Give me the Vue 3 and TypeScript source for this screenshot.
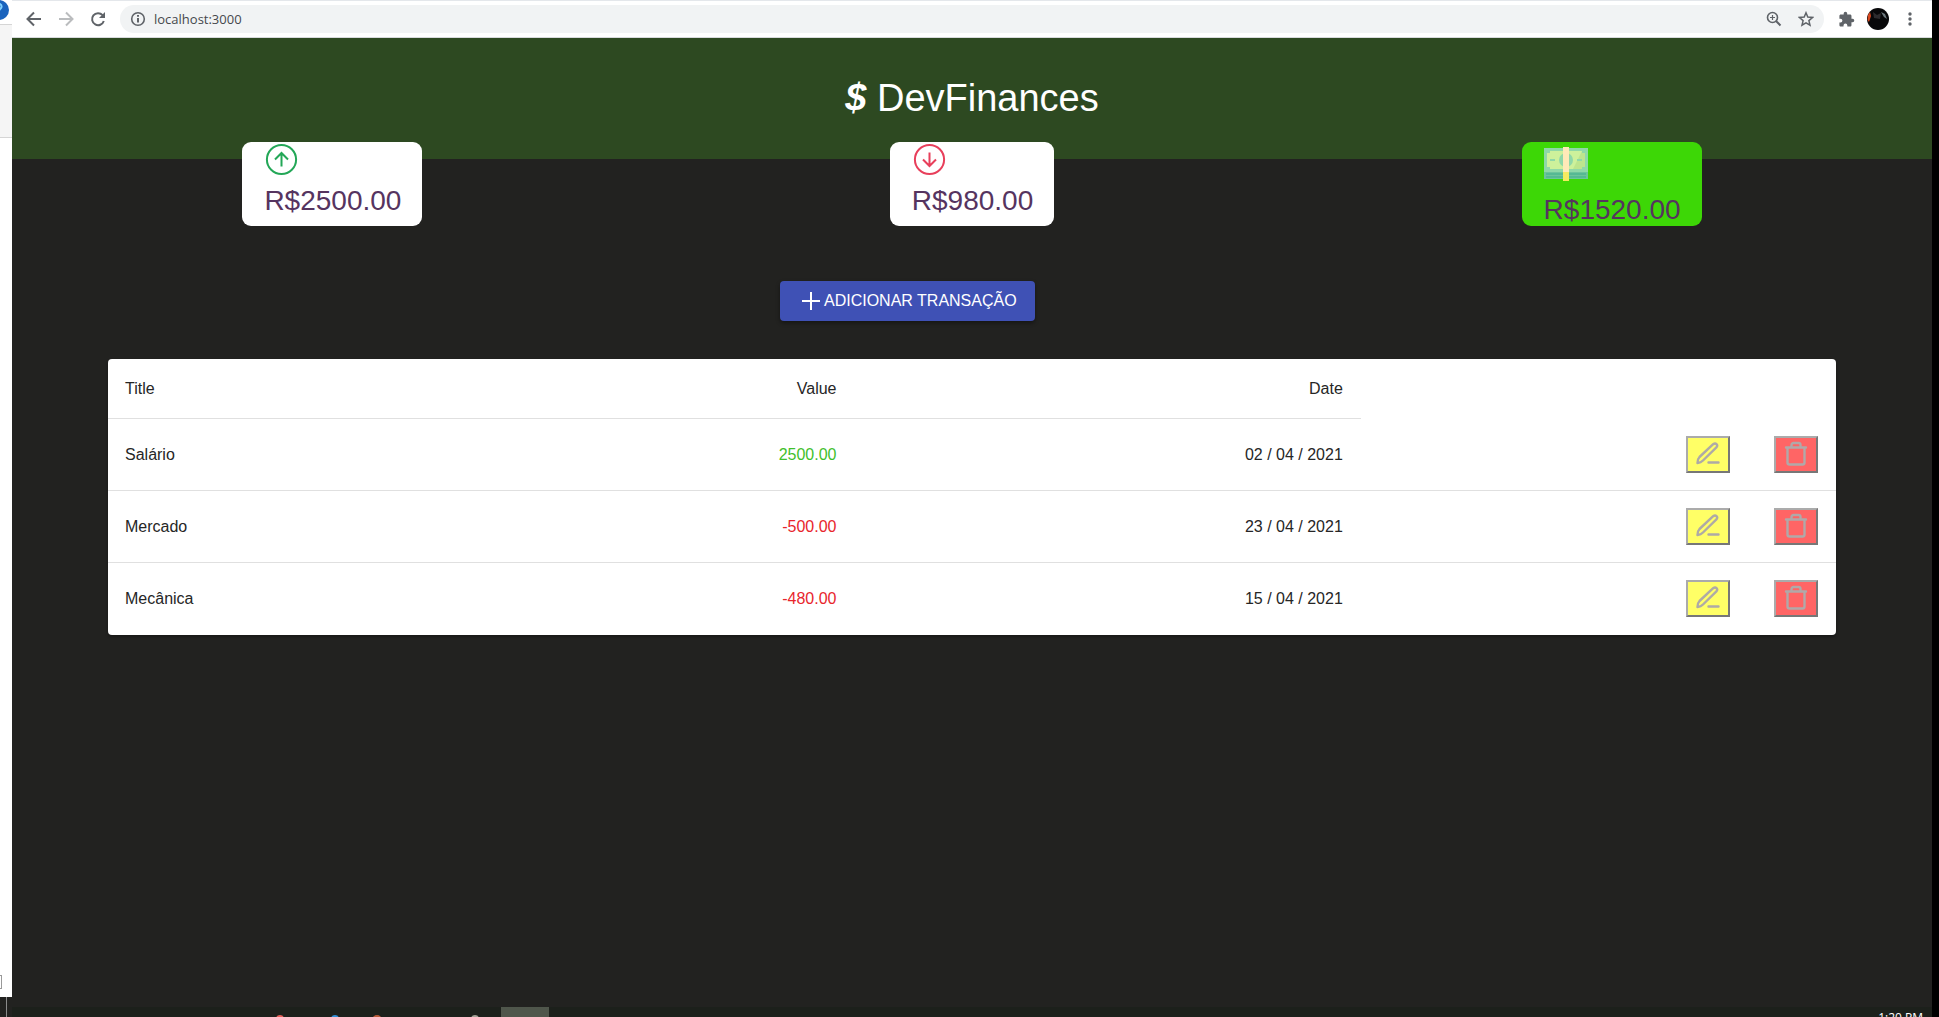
<script setup lang="ts">
import { ref } from 'vue'

interface Transaction {
  id: number
  title: string
  value: number
  date: string
}

const address = ref('localhost:3000')

const transactions = ref<Transaction[]>([
  { id: 1, title: 'Salário', value: 2500, date: '02 / 04 / 2021' },
  { id: 2, title: 'Mercado', value: -500, date: '23 / 04 / 2021' },
  { id: 3, title: 'Mecânica', value: -480, date: '15 / 04 / 2021' },
])
</script>

<template>
  <div class="desktop">
    <div class="behind" aria-hidden="true">
      <div class="behind-top">
        <svg width="12" height="24" viewBox="0 0 12 24">
          <circle cx="-1" cy="10" r="10" fill="#1a63bd" />
          <path d="M-3 5c2-2 5-1 4.500 2-.3 2-2.500 2-2.500 4" fill="none" stroke="#7fd0ff" stroke-width="2" />
        </svg>
      </div>
      <div class="behind-panel"></div>
      <div class="behind-body"><span class="behind-box"></span></div>
      <div class="behind-foot"></div>
    </div>

    <div class="window">
      <nav class="toolbar">
        <button class="tool" type="button" aria-label="Back">
          <svg width="16" height="16" viewBox="0 0 16 16" fill="none" stroke="#5f6368" stroke-width="2"><path d="M15 8H2M8 1.500 1.500 8 8 14.500" /></svg>
        </button>
        <button class="tool" type="button" aria-label="Forward">
          <svg width="16" height="16" viewBox="0 0 16 16" fill="none" stroke="#babcbe" stroke-width="2"><path d="M1 8h13M8 1.500 14.500 8 8 14.500" /></svg>
        </button>
        <button class="tool" type="button" aria-label="Reload">
          <svg width="16" height="16" viewBox="0 0 16 16"><path d="M12.600 4.200A6 6 0 1 0 13.800 10" fill="none" stroke="#5f6368" stroke-width="2" /><path d="M15 1v6H9z" fill="#5f6368" /></svg>
        </button>
        <div class="omnibox">
          <svg width="16" height="16" viewBox="0 0 16 16" fill="none" stroke="#5f6368" stroke-width="1.600"><circle cx="8" cy="8" r="6.300" /><path d="M8 7v4.500M8 4v1.800" stroke-width="2" /></svg>
          <input v-model="address" class="address" type="text" aria-label="Address" />
          <button class="tool" type="button" aria-label="Zoom">
            <svg width="16" height="16" viewBox="0 0 16 16" fill="none" stroke="#5f6368" stroke-width="1.600"><circle cx="6.500" cy="6.500" r="5" /><path d="m10 10 4.500 4.500" stroke-width="2" /><path d="M6.500 4v5M4 6.500h5" stroke-width="1.200" /></svg>
          </button>
          <button class="tool" type="button" aria-label="Bookmark">
            <svg width="16" height="16" viewBox="0 0 16 16" fill="none" stroke="#5f6368" stroke-width="1.500"><path d="m8 1.800 1.800 4.300 4.700.4-3.600 3.100 1.100 4.600L8 11.800l-4 2.400 1.100-4.600L1.500 6.500l4.700-.4z" /></svg>
          </button>
        </div>
        <button class="tool" type="button" aria-label="Extensions">
          <svg width="17" height="17" viewBox="0 0 24 24" fill="#5f6368"><path d="M20.500 11H19V7c0-1.100-.9-2-2-2h-4V3.500a2.500 2.500 0 0 0-5 0V5H4c-1.100 0-2 .9-2 2v3.800h1.500a2.700 2.700 0 0 1 0 5.400H2V20c0 1.100.9 2 2 2h3.800v-1.500a2.700 2.700 0 0 1 5.400 0V22H17c1.100 0 2-.9 2-2v-4h1.500a2.500 2.500 0 0 0 0-5z" /></svg>
        </button>
        <button class="tool" type="button" aria-label="Profile">
          <svg width="22" height="22" viewBox="0 0 22 22">
            <circle cx="11" cy="11" r="11" fill="#08080a" />
            <path d="M1 7 3 4l1 4-2 6-1.500-2z" fill="#d9481f" />
            <path d="m14 4 4 2 2 5-3-2z" fill="#6f7b80" />
            <path d="m6 4 4 3 4-2-1 6-6-1z" fill="#2d2b2e" />
          </svg>
        </button>
        <button class="tool" type="button" aria-label="Menu">
          <svg width="16" height="16" viewBox="0 0 16 16" fill="#5f6368"><circle cx="8" cy="3" r="1.700" /><circle cx="8" cy="8" r="1.700" /><circle cx="8" cy="13" r="1.700" /></svg>
        </button>
      </nav>

      <main class="page">
        <header class="hero">
          <h1 class="brand"><em class="brand-mark">$</em> DevFinances</h1>
        </header>

        <section class="cards">
          <div class="card">
            <svg width="35" height="35" viewBox="0 0 35 35" fill="none" stroke="#23a757" stroke-width="2"><circle cx="17.500" cy="17.500" r="14.600" /><path d="M17.500 24.500v-13M11 17.500l6.500-6.500 6.500 6.500" /></svg>
            <span class="amount">R$2500.00</span>
          </div>
          <div class="card">
            <svg width="35" height="35" viewBox="0 0 35 35" fill="none" stroke="#e83f5b" stroke-width="2"><circle cx="17.500" cy="17.500" r="14.600" /><path d="M17.500 10.500v13M11 17.500l6.500 6.500 6.500-6.500" /></svg>
            <span class="amount">R$980.00</span>
          </div>
          <div class="card total">
            <svg width="44" height="44" viewBox="0 0 44 44">
              <path d="M0 6h44v24H0z" fill="#8fd8a8" />
              <path d="M0 30h44v7H0z" fill="#6cc49b" />
              <path d="M2 32h40M2 35h40" stroke="#3fae8c" stroke-width="1" />
              <path d="M6 9h32v2h3v14h-3v2H6v-2H3V11h3z" fill="#cdf19b" />
              <path d="M38 9v2h3v14h-3v2h-9z" fill="#bde58d" />
              <circle cx="22" cy="18" r="7" fill="#8fd8a8" />
              <path d="M6 17h5v2H6zM33 17h5v2h-5z" fill="#8fd8a8" />
              <path d="M19 5h6v25h-6z" fill="#ffe9b8" />
              <path d="M19 30h6v9h-6z" fill="#f5ea60" />
            </svg>
            <span class="amount">R$1520.00</span>
          </div>
        </section>

        <button class="add" type="button">
          <svg width="22" height="22" viewBox="0 0 22 22" fill="none" stroke="#fff" stroke-width="2"><path d="M11 2v18M2 11h18" /></svg>
          ADICIONAR TRANSAÇÃO
        </button>

        <table class="sheet">
          <colgroup>
            <col class="col-title" /><col class="col-value" /><col class="col-date" /><col class="col-edit" /><col class="col-delete" />
          </colgroup>
          <thead>
            <tr>
              <th scope="col" class="start">Title</th>
              <th scope="col">Value</th>
              <th scope="col">Date</th>
              <td class="blank" colspan="2"></td>
            </tr>
          </thead>
          <tbody>
            <tr v-for="item in transactions" :key="item.id">
              <td class="start">{{ item.title }}</td>
              <td :class="item.value < 0 ? 'expense' : 'income'">{{ item.value.toFixed(2) }}</td>
              <td>{{ item.date }}</td>
              <td class="action">
                <button class="act edit" type="button" :aria-label="`Edit ${item.title}`">
                  <svg width="26" height="26" viewBox="0 0 26 26" fill="none" stroke="#aeaaa6" stroke-width="2.400" stroke-linecap="round" stroke-linejoin="round"><path d="M2.500 23c0-3 .5-4.500 2-6L18.200 4.200c2.500-2 5.300.8 3.200 3.200L8 20.500c-1.500 1.500-3 2.200-5.500 2.500zM13.500 22.500h10" /></svg>
                </button>
              </td>
              <td class="action">
                <button class="act delete" type="button" :aria-label="`Delete ${item.title}`">
                  <svg width="26" height="26" viewBox="0 0 26 26" fill="none" stroke="#b0a9a9" stroke-width="2.400" stroke-linecap="round" stroke-linejoin="round"><path d="M3 7.500h20M4.500 7.500v15a2 2 0 0 0 2 2h13a2 2 0 0 0 2-2v-15M8.500 7V5a2 2 0 0 1 2-2h5a2 2 0 0 1 2 2v2" /></svg>
                </button>
              </td>
            </tr>
          </tbody>
        </table>
      </main>

      <footer class="taskbar">
        <svg class="apps" width="229" height="10" viewBox="0 0 229 10" aria-hidden="true">
          <circle cx="8" cy="12" r="4" fill="#e8615a" />
          <circle cx="63" cy="12" r="4" fill="#2f8fd8" />
          <circle cx="105" cy="13" r="5" fill="#b85a38" />
          <circle cx="203" cy="12" r="4" fill="#a3a397" />
        </svg>
        <span class="active-app"></span>
        <time class="clock">1:20 PM</time>
      </footer>
    </div>

    <div class="edge"></div>
  </div>
</template>

<style>
body {
  margin: 0;
  background: #000;
}
</style>

<style scoped>
.desktop {
  display: flex;
  min-height: 100vh;
  font-family: "Liberation Sans", Arial, sans-serif;
  font-size: 16px;
  line-height: 24px;
}

.desktop * {
  box-sizing: border-box;
}

.desktop svg {
  display: block;
  flex: none;
}

button {
  font: inherit;
}

/* Sliver of the window that sits behind the browser */
.behind {
  display: flex;
  flex: none;
  flex-direction: column;
  width: 12px;
  background: #fff;
}

.behind-top {
  height: 24px;
}

.behind-panel {
  height: 114px;
  border-top: 1px solid #d5d5d5;
  border-bottom: 1px solid #d5d5d5;
  background: #f5f5f5;
}

.behind-body {
  display: flex;
  flex: 1;
  align-items: flex-end;
  padding-bottom: 8px;
}

.behind-box {
  width: 2px;
  height: 14px;
  border: 1px solid #999;
  border-left: 0;
}

.behind-foot {
  width: 7px;
  height: 20px;
  border-right: 1px solid #8b8b8b;
  background: #222220;
  box-shadow: 5px 0 #222220;
}

.window {
  display: flex;
  flex: 1;
  flex-direction: column;
  min-width: 0;
}

.edge {
  flex: none;
  width: 7px;
  background: #000;
}

.toolbar {
  display: flex;
  align-items: center;
  height: 38px;
  padding: 0 6px;
  border-top: 1px solid #e4e7eb;
  border-bottom: 1px solid #d8dadd;
  background: #fff;
}

.tool {
  display: flex;
  align-items: center;
  justify-content: center;
  width: 32px;
  height: 28px;
  padding: 0;
  border: 0;
  background: none;
}

.omnibox {
  display: flex;
  flex: 1;
  align-items: center;
  height: 28px;
  margin: 0 6px;
  padding: 0 2px 0 10px;
  border-radius: 14px;
  background: #f1f3f4;
}

.address {
  flex: 1;
  min-width: 0;
  height: 28px;
  margin-left: 8px;
  padding: 0;
  border: 0;
  outline: 0;
  background: none;
  color: #45484c;
  font-family: "Open Sans", sans-serif;
  font-size: 13px;
}

.page {
  flex: 1;
  background: #222220;
}

.hero {
  height: 121px;
  padding-top: 36px;
  background: #2d4921;
}

.brand {
  margin: 0;
  color: #fff;
  font-size: 38px;
  font-weight: 400;
  line-height: 48px;
  text-align: center;
}

.brand-mark {
  font-weight: 700;
}

.cards {
  display: flex;
  justify-content: space-between;
  margin-top: -17px;
  padding: 0 12%;
}

.card {
  height: 84px;
  padding: 0 21px 0 22px;
  border-radius: 9px;
  background: #fff;
}

.total {
  background: #3dd706;
}

.amount {
  display: block;
  color: #56345f;
  font-size: 28px;
  line-height: 48px;
}

.add {
  display: flex;
  gap: 2px;
  align-items: center;
  height: 40px;
  margin: 55px 0 38px 40%;
  padding: 0 18px 0 20px;
  border: 0;
  border-radius: 4px;
  background: #3f51b5;
  box-shadow: 0 2px 4px rgba(0, 0, 0, 0.4);
  color: #fff;
  white-space: nowrap;
}

.sheet {
  width: 90%;
  margin: 0 auto;
  border-radius: 4px;
  border-spacing: 0;
  background: #fff;
  box-shadow: 0 2px 3px rgba(0, 0, 0, 0.3);
  color: #262626;
  table-layout: fixed;
}

.col-title {
  width: 25.2%;
}

.col-value {
  width: 18%;
}

.col-date {
  width: 29.3%;
}

.col-edit {
  width: 22.4%;
}

.col-delete {
  width: 5.1%;
}

.sheet th,
.sheet td {
  height: 72px;
  padding: 0 18px 0 17px;
  border-bottom: 1px solid #e0e0e0;
  font-weight: 400;
  text-align: right;
}

.sheet thead th,
.sheet thead td {
  height: 60px;
}

.sheet .start {
  text-align: left;
}

.sheet .blank,
.sheet tbody tr:last-child td {
  border-bottom-color: transparent;
}

.sheet .income {
  color: #3fc02c;
}

.sheet .expense {
  color: #e8252c;
}

.act {
  display: flex;
  align-items: flex-start;
  justify-content: center;
  width: 44px;
  height: 37px;
  margin-left: auto;
  padding: 2px 0 0;
  border: 2px solid;
  border-color: #ababab #777 #777 #ababab;
}

.edit {
  background: #ffff66;
}

.delete {
  background: #ff6565;
}

.taskbar {
  display: flex;
  justify-content: space-between;
  height: 10px;
  padding: 0 9px 0 260px;
  overflow: hidden;
  background: #1c201b;
}

.active-app {
  width: 48px;
  margin-right: auto;
  background: #4f564b;
}

.clock {
  padding-top: 3px;
  color: #fff;
  font-family: "Open Sans", sans-serif;
  font-size: 12px;
  line-height: 16px;
}
</style>
